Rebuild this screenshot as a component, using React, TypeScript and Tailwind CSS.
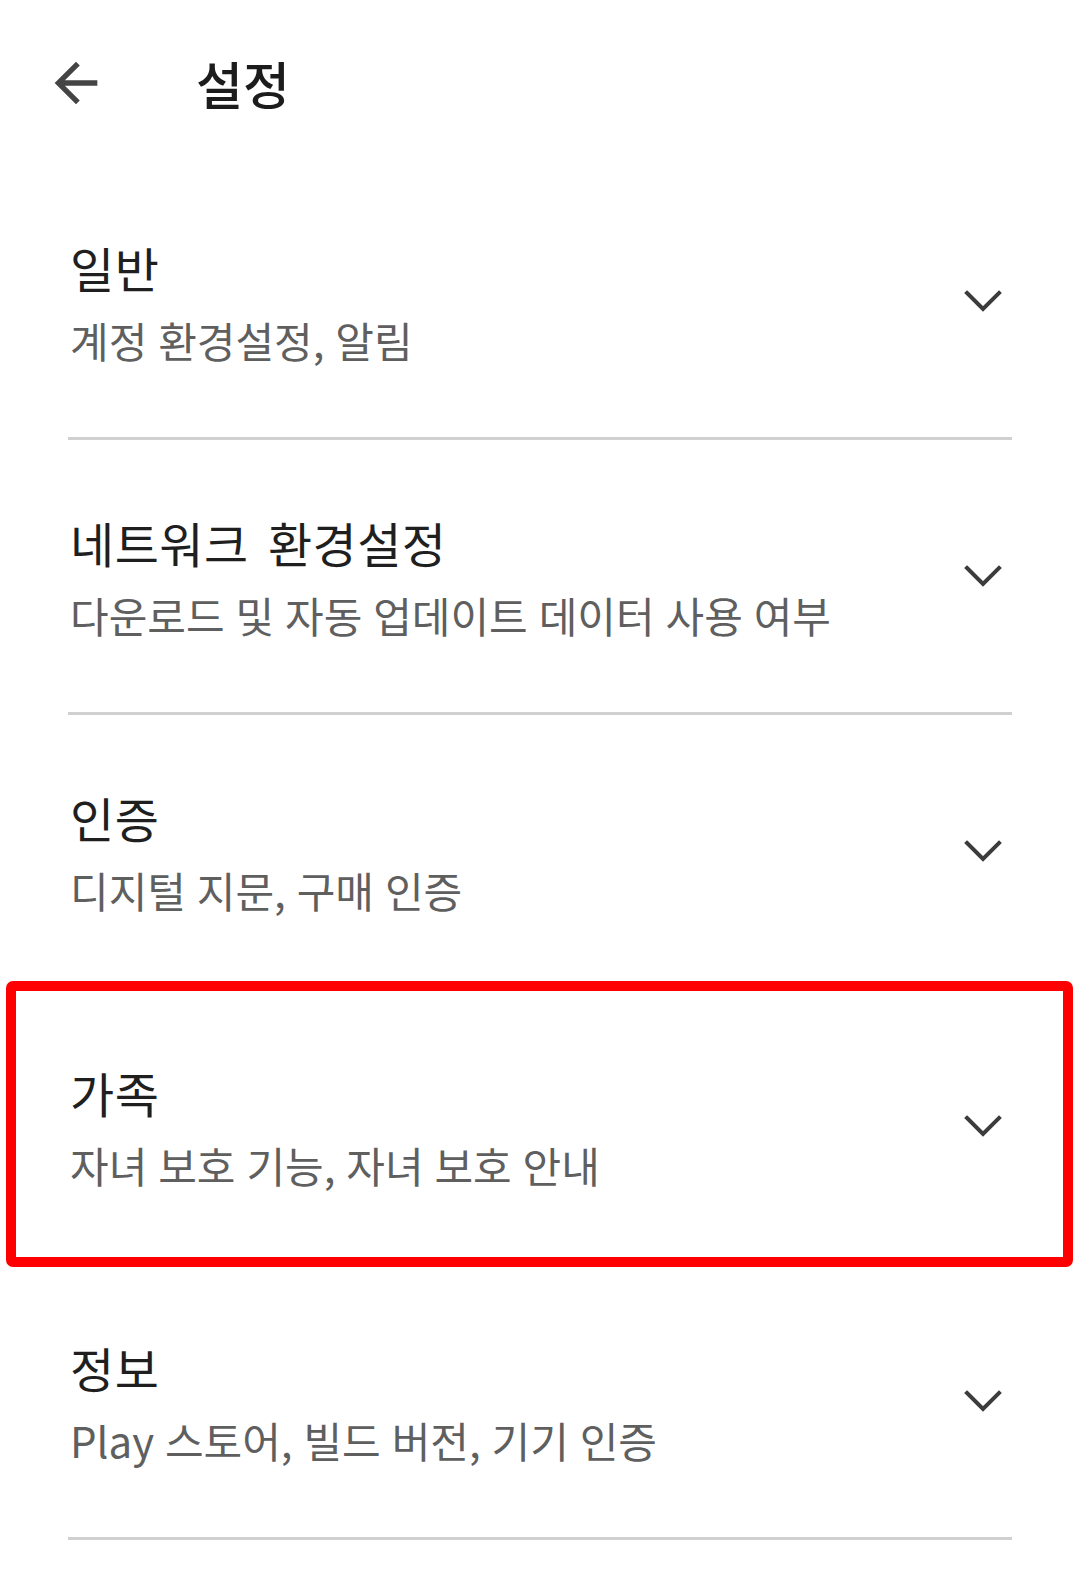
import React from "react";

const sections = [
  { title: "일반", sub: "계정 환경설정, 알림" },
  { title: "네트워크 환경설정", sub: "다운로드 및 자동 업데이트 데이터 사용 여부" },
  { title: "인증", sub: "디지털 지문, 구매 인증" },
  { title: "가족", sub: "자녀 보호 기능, 자녀 보호 안내", highlight: true },
  { title: "정보", sub: "Play 스토어, 빌드 버전, 기기 인증" },
];

function Chevron() {
  return (
    <svg width="40" height="24" viewBox="0 0 40 24" className="shrink-0">
      <path d="M4 4 L20 20 L36 4" fill="none" stroke="#3c3c3c" strokeWidth="4" strokeLinecap="square" strokeLinejoin="miter" />
    </svg>
  );
}

export default function App() {
  return (
    <div
      className="w-[1080px] min-h-[1592px] bg-white"
      style={{ fontFamily: '"Noto Sans CJK KR", "Noto Sans", sans-serif' }}
    >
      <div className="h-[165px] flex items-center">
        <svg width="64" height="64" viewBox="0 0 24 24" className="ml-[44px] shrink-0">
          <path
            d="M20 11H7.83l5.59-5.59L12 4l-8 8 8 8 1.41-1.41L7.83 13H20v-2z"
            fill="#444444"
          />
        </svg>
        <div className="ml-[88px] text-[51px] leading-[62px] font-medium text-[#1c1c1c]">설정</div>
      </div>
      {sections.map((s, i) => (
        <div key={i} className="relative">
          <div className="h-[272px] flex items-center justify-between pl-[70px] pr-[77px]">
            <div className="flex flex-col gap-[17px] pt-[2px]">
              <div className="text-[48px] leading-[58px] text-[#1f1f1f] [word-spacing:8px] tracking-[0.5px]">{s.title}</div>
              <div className="text-[42px] leading-[54px] text-[#5f5f5f] [word-spacing:1.5px]">{s.sub}</div>
            </div>
            <Chevron />
          </div>
          <div className="h-[3px] mx-[68px] bg-[#d0d0d0]" />
          {s.highlight && (
            <div className="absolute left-[6px] right-[7px] top-[-9px] bottom-[-2px] border-[10px] border-[#ff0000] rounded-[7px] z-10 pointer-events-none" />
          )}
        </div>
      ))}
    </div>
  );
}
